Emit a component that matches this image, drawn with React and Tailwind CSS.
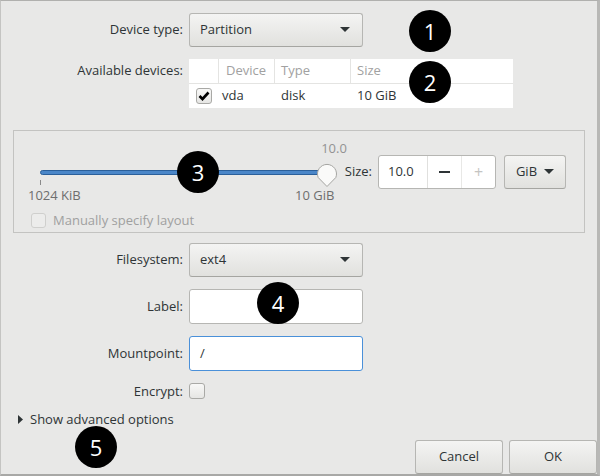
import React from 'react'

const font = { fontFamily: '"Open Sans", "Noto Sans", sans-serif' }

function Arrow() {
  return (
    <svg width="10" height="6" viewBox="0 0 10 6">
      <path d="M0 0 L10 0 L5 5 Z" fill="#2e3436" />
    </svg>
  )
}

function Combo({ text, className = '' }) {
  return (
    <div
      className={`h-[34px] flex items-center justify-between pl-[10px] pr-[12px] rounded-[3px] border border-[#b6b6b3] border-b-[#a5a5a1] bg-gradient-to-b from-[#f4f4f3] to-[#e1e1de] text-[#2e3436] ${className}`}
    >
      <span>{text}</span>
      <Arrow />
    </div>
  )
}

function Button({ children, className = '' }) {
  return (
    <div
      className={`h-[34px] flex items-center justify-center rounded-[3px] border border-[#b6b6b3] border-b-[#a5a5a1] bg-gradient-to-b from-[#f4f4f3] to-[#e1e1de] text-[#2e3436] ${className}`}
    >
      {children}
    </div>
  )
}

function Badge({ n, className }) {
  return (
    <div className={`absolute w-[42px] h-[42px] rounded-full bg-black text-white flex items-center justify-center text-[22px] ${className}`}>
      {n}
    </div>
  )
}

function Label({ children, className = '' }) {
  return <div className={`text-right text-[#2e3436] ${className}`}>{children}</div>
}

export default function App() {
  return (
    <div
      style={font}
      className="relative w-[600px] h-[476px] bg-[#e8e8e7] text-[13px] border-t border-t-[#b0b0ae] border-l border-l-[#c4c4c2] border-r-[3px] border-r-[#b8b8b6] border-b-2 border-b-[#a8a8a6] overflow-hidden"
    >
      <div className="grid grid-cols-[182px_174px] gap-x-[6px] items-center pt-[12px]">
        <Label>Device type:</Label>
        <Combo text="Partition" />
      </div>

      <div className="grid grid-cols-[182px_324px] gap-x-[6px] items-start mt-[12px]">
        <div className="text-right text-[#2e3436] pt-[2px]">Available devices:</div>
        <div className="bg-white">
          <div className="flex h-[25px] items-center text-[#a1a1a1] border-b border-[#e4e4e2]">
            <div className="w-[30px] h-full border-r border-[#e4e4e2]" />
            <div className="w-[56px] h-full flex items-center pl-[7px] border-r border-[#e4e4e2]">Device</div>
            <div className="w-[76px] h-full flex items-center pl-[6px] border-r border-[#e4e4e2]">Type</div>
            <div className="flex-1 h-full flex items-center pl-[6px]">Size</div>
          </div>
          <div className="flex h-[24px] items-center text-[#2e3436]">
            <div className="w-[30px] flex justify-center">
              <div className="w-[16px] h-[16px] rounded-[3px] border border-[#a9a9a6] bg-gradient-to-b from-[#f8f8f7] to-[#e6e6e4] flex items-center justify-center">
                <svg width="12" height="10" viewBox="0 0 12 10">
                  <path d="M1.5 5 L4.5 8 L10.5 1.5" stroke="#000" strokeWidth="2.6" fill="none" />
                </svg>
              </div>
            </div>
            <div className="w-[56px] pl-[3px]">vda</div>
            <div className="w-[76px] pl-[6px]">disk</div>
            <div className="flex-1 pl-[6px]">10 GiB</div>
          </div>
        </div>
      </div>

      <div className="mx-[12px] mt-[22px] h-[103px] border border-[#c3c3c1] pl-[14px] pr-[18px]">
        <div className="flex items-start mt-[12px]">
          <div className="w-[310px] relative h-[60px]">
            <div className="absolute left-[286px] top-[-4px] w-[40px] text-center text-[#939393]">10.0</div>
            <div className="absolute left-[12px] top-[27px] w-[290px] h-[5px] rounded-full bg-[#4a86c8] border border-[#2a5f9a]" />
            <svg className="absolute left-[288px] top-[18px]" width="22" height="27" viewBox="0 0 22 27">
              <path d="M11 25.5 L2.2 16.5 A9.5 9.5 0 1 1 19.8 16.5 Z" fill="#fafaf9" stroke="#a5a5a2" strokeWidth="1" />
            </svg>
            <div className="absolute left-[12px] top-[37px] w-px h-[5px] bg-[#8a8a8a]" />
            <div className="absolute left-0 top-[43px] text-[#6e6e6e]">1024 KiB</div>
            <div className="absolute left-[267px] top-[43px] text-[#6e6e6e]">10 GiB</div>
          </div>
          <div className="flex items-center mt-[12px]">
            <span className="text-[#2e3436] ml-[9px]">Size:</span>
            <div className="ml-[6px] w-[118px] h-[34px] flex bg-white border border-[#b6b6b3] rounded-[3px] text-[#2e3436]">
              <div className="w-[48px] flex items-center pl-[9px]">10.0</div>
              <div className="w-[34px] border-l border-[#e0e0de] flex items-center justify-center">
                <div className="w-[11px] h-[2px] bg-[#2e3436]" />
              </div>
              <div className="flex-1 border-l border-[#e8e8e6] flex items-center justify-center text-[#c4c4c2] text-[16px]">+</div>
            </div>
            <Button className="ml-[8px] w-[62px] gap-[7px]">
              <span>GiB</span>
              <Arrow />
            </Button>
          </div>
        </div>
        <div className="flex items-center mt-[8px] ml-[3px] text-[#a0a0a0]">
          <div className="w-[15px] h-[15px] rounded-[3px] border border-[#cfcfcd] bg-[#ececeb]" />
          <span className="ml-[7px]">Manually specify layout</span>
        </div>
      </div>

      <div className="grid grid-cols-[182px_174px] gap-x-[6px] gap-y-[12px] items-center mt-[10px]">
        <Label>Filesystem:</Label>
        <Combo text="ext4" />
        <Label>Label:</Label>
        <div className="h-[35px] bg-white border border-[#b6b6b3] rounded-[3px]" />
        <Label>Mountpoint:</Label>
        <div className="h-[35px] bg-white border border-[#4a90d9] rounded-[3px] flex items-center pl-[10px] text-[#2e3436]">/</div>
        <Label className="leading-[16px]">Encrypt:</Label>
        <div className="w-[16px] h-[16px] rounded-[3px] border border-[#a9a9a6] bg-gradient-to-b from-[#f8f8f7] to-[#e6e6e4]" />
      </div>

      <div className="flex items-center mt-[11px] ml-[17px] text-[#2e3436]">
        <svg width="6" height="9" viewBox="0 0 6 9">
          <path d="M0 0 L5 4.5 L0 9 Z" fill="#2e3436" />
        </svg>
        <span className="ml-[6px]">Show advanced options</span>
      </div>

      <div className="flex justify-end gap-[6px] mt-[10px]">
        <Button className="w-[88px]">Cancel</Button>
        <Button className="w-[88px]">OK</Button>
      </div>

      <Badge n="1" className="left-[408px] top-[9px]" />
      <Badge n="2" className="left-[408px] top-[60px]" />
      <Badge n="3" className="left-[176px] top-[150px]" />
      <Badge n="4" className="left-[256px] top-[281px]" />
      <Badge n="5" className="left-[74px] top-[425px]" />
    </div>
  )
}
